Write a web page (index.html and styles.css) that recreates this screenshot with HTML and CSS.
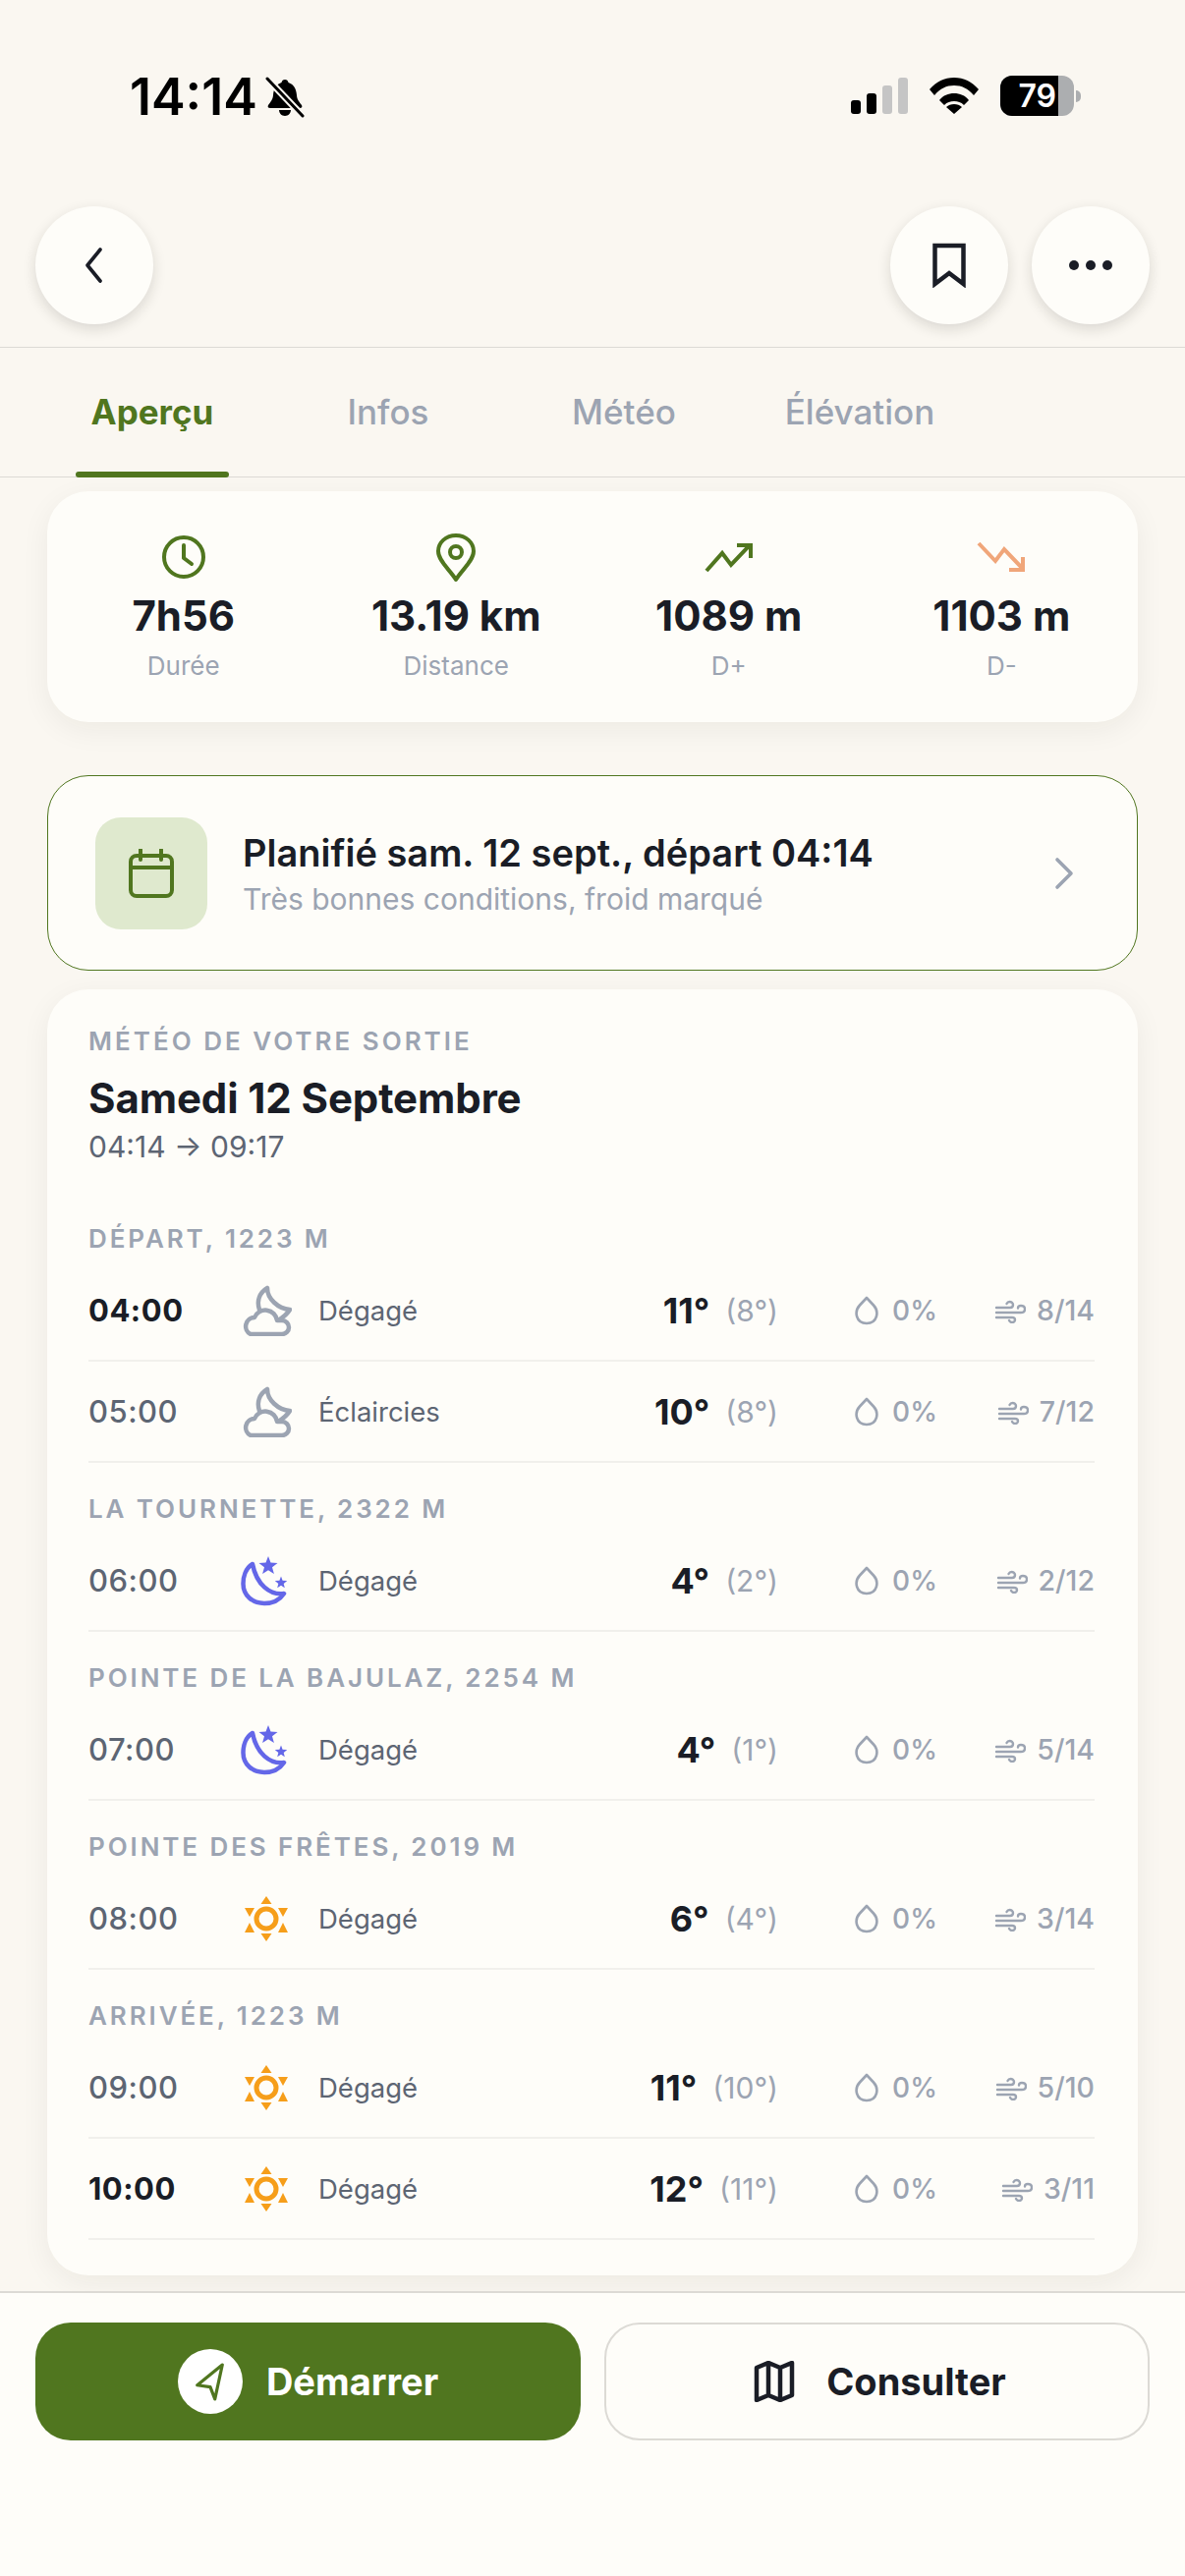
FILE: index.html
```html
<!DOCTYPE html>
<html lang="fr">

<head>
  <meta charset="UTF-8">
  <meta name="viewport" content="width=device-width, initial-scale=1.0">
  <title>Sortie</title>
  <link rel="stylesheet" href="styles.css">
</head>

<body>
  <svg class="defs" width="0" height="0">
    <symbol id="cloud-moon" viewBox="0 0 52 52">
      <path d="M27 3C19 8 16 16 19 25M27 3C27 14 38 24 50 25 47 30 43 33 38 36" fill="none" stroke="currentColor" stroke-width="4.500" stroke-linejoin="round" stroke-linecap="round"/>
      <path d="M10 50h32a7 7 0 0 0 0-14h-5a12 12 0 0 0-23-3 9 9 0 0 0-4 17z" fill="#fefdf9" stroke="currentColor" stroke-width="4.500" stroke-linejoin="round"/>
    </symbol>
    <symbol id="moon-stars" viewBox="0 0 52 52">
      <path d="M12 9C5 13 2.500 22 2.500 29 2.500 41 12 49 24 49 33 49 40 45 44 39 30 41 16 30 12 9z" fill="none" stroke="currentColor" stroke-width="4.500" stroke-linejoin="round"/>
      <polygon points="28,1 30.500,7.600 37.500,7.900 32,12.300 33.900,19.100 28,15.200 22.100,19.100 24,12.300 18.500,7.900 25.500,7.600" fill="currentColor"/>
      <polygon points="41,21.500 42.600,25.700 47.200,26 43.700,28.900 44.800,33.300 41,30.800 37.200,33.300 38.300,28.900 34.800,26 39.400,25.700" fill="currentColor"/>
    </symbol>
    <symbol id="sun" viewBox="-26 -26 52 52">
      <circle r="10" fill="none" stroke="currentColor" stroke-width="5"/>
      <path d="M0-23l5.500 8h-11zM0 23l-5.500-8h11zM-22-11h10l-5 9zM22-11H12l5 9zM-22 14h10l-5-10zM22 14H12l5-10z" fill="currentColor"/>
    </symbol>
    <symbol id="drop" viewBox="0 0 26 30">
      <path d="M13 2l7 7.500c6 6.500 4 18.500-7 18.500S0 16 6 9.500z" fill="none" stroke="currentColor" stroke-width="2.600" stroke-linejoin="round"/>
    </symbol>
    <symbol id="wind" viewBox="0 0 32 26">
      <path d="M2 10h14c2 0 3-1 3-3s-2-3-3.500-3-2.500 1-3 2M2 15h25c2 0 4-1 4-3.500S29 8 27 8s-3 1-3 2.500M2 20h16c2 0 3 1 3 2.500S19.500 25 18 25s-2.500-1-3-2" fill="none" stroke="currentColor" stroke-width="2.400" stroke-linecap="round"/>
    </symbol>
  </svg>

  <div class="screen">
    <div class="status">
      <div class="status-left">
        <span class="clock">14:14</span>
        <svg class="bell" viewBox="0 0 40 42" width="40" height="42">
          <path d="M20 3c2 0 3 1 3.500 3 6 2 8 7 8.500 13 .3 5 3 7 5 10 1 2 0 3-2 3H5c-2 0-3-1-2-3 2-3 4.500-5 5-10 .5-6 2.500-11 8.500-13C17 4 18 3 20 3zM14 34h12c0 3-2.500 6-6 6s-6-3-6-6z" fill="#000"/>
          <path d="M1 1l38 40" stroke="#faf7f1" stroke-width="7"/>
          <path d="M2 2l36 38" stroke="#000" stroke-width="3" stroke-linecap="round"/>
        </svg>
      </div>
      <div class="status-right">
        <div class="signal">
          <i class="bar on b1"></i><i class="bar on b2"></i><i class="bar b3"></i><i class="bar b4"></i>
        </div>
        <svg class="wifi" viewBox="0 0 50 37" width="50" height="37">
          <path d="M0 12C7 4 15 0 25 0s18 4 25 12l-5 6C39 11 33 8 25 8S11 11 5 18zM10 23c4-5 9-7 15-7s11 2 15 7l-5 5c-3-3-6-4-10-4s-7 1-10 4zM17 30c2-2 5-3 8-3s6 1 8 3l-8 7z" fill="#000"/>
        </svg>
        <div class="battery">
          <div class="battery-body"><span class="battery-fill">79</span></div>
          <i class="battery-cap"></i>
        </div>
      </div>
    </div>

    <div class="topbar">
      <button class="round-btn">
        <svg class="back" viewBox="0 0 24 40" width="24" height="40"><path d="M20 4L7 20l13 16" fill="none" stroke="#1a1d26" stroke-width="3.600" stroke-linecap="round" stroke-linejoin="round"/></svg>
      </button>
      <div class="top-actions">
        <button class="round-btn">
          <svg viewBox="0 0 36 46" width="36" height="46"><path d="M3.500 3h29v39L18 31 3.500 42z" fill="none" stroke="#1a1d26" stroke-width="4.500"/></svg>
        </button>
        <button class="round-btn">
          <svg viewBox="0 0 46 12" width="46" height="12"><circle cx="6" cy="6" r="5" fill="#1a1d26"/><circle cx="23" cy="6" r="5" fill="#1a1d26"/><circle cx="40" cy="6" r="5" fill="#1a1d26"/></svg>
        </button>
      </div>
    </div>

    <div class="tabs">
      <div class="tab active">Aperçu</div>
      <div class="tab">Infos</div>
      <div class="tab">Météo</div>
      <div class="tab">Élévation</div>
    </div>

    <main class="content">
      <section class="card stats">
        <div class="stat">
          <svg class="stat-icon" viewBox="0 0 46 50" width="46" height="50"><circle cx="23" cy="24" r="20" fill="none" stroke="#50761f" stroke-width="4"/><path d="M23 12v13l8 6" fill="none" stroke="#50761f" stroke-width="4" stroke-linecap="round" stroke-linejoin="round"/></svg>
          <div class="stat-value">7h56</div>
          <div class="stat-label">Durée</div>
        </div>
        <div class="stat">
          <svg class="stat-icon" viewBox="0 0 46 50" width="46" height="50"><path d="M23 47C17 37 5 28 5 18 5 9 13 2 23 2s18 7 18 16c0 10-12 19-18 29z" fill="none" stroke="#50761f" stroke-width="4" stroke-linejoin="round"/><circle cx="23" cy="19" r="6" fill="none" stroke="#50761f" stroke-width="4"/></svg>
          <div class="stat-value">13.19 km</div>
          <div class="stat-label">Distance</div>
        </div>
        <div class="stat">
          <svg class="stat-icon" viewBox="0 0 50 50" width="50" height="50"><path d="M2 38L18 20l9 12L46 12" fill="none" stroke="#50761f" stroke-width="4"/><path d="M33 12h14v13" fill="none" stroke="#50761f" stroke-width="4"/></svg>
          <div class="stat-value">1089 m</div>
          <div class="stat-label">D+</div>
        </div>
        <div class="stat">
          <svg class="stat-icon" viewBox="0 0 50 50" width="50" height="50"><path d="M2 10l17 18 9-12 19 20" fill="none" stroke="#f0a67a" stroke-width="4"/><path d="M47 24v13H33" fill="none" stroke="#f0a67a" stroke-width="4"/></svg>
          <div class="stat-value">1103 m</div>
          <div class="stat-label">D-</div>
        </div>
      </section>

      <section class="card planned">
        <div class="planned-icon">
          <svg viewBox="0 0 46 50" width="46" height="50"><rect x="2" y="7" width="42" height="41" rx="6" fill="none" stroke="#50761f" stroke-width="4"/><path d="M2 19h42M12 1v10M33 1v10" stroke="#50761f" stroke-width="4" stroke-linecap="round"/></svg>
        </div>
        <div class="planned-text">
          <div class="planned-title">Planifié sam. 12 sept., départ 04:14</div>
          <div class="planned-sub">Très bonnes conditions, froid marqué</div>
        </div>
        <svg class="planned-arrow" viewBox="0 0 20 34" width="20" height="34"><path d="M3 3l14 14L3 31" fill="none" stroke="#9ca4b2" stroke-width="3.600" stroke-linecap="round" stroke-linejoin="round"/></svg>
      </section>

      <section class="card weather">
        <div class="weather-kicker">MÉTÉO DE VOTRE SORTIE</div>
        <div class="weather-date">Samedi 12 Septembre</div>
        <div class="weather-range">04:14 → 09:17</div>

        <div class="place first">DÉPART, 1223 M</div>
        <div class="row">
          <span class="hour strong">04:00</span>
          <svg class="w-icon grey"><use href="#cloud-moon"/></svg>
          <span class="cond">Dégagé</span>
          <span class="temp">11°</span><span class="feel">(8°)</span>
          <span class="rain"><svg class="drop"><use href="#drop"/></svg>0%</span>
          <span class="windv"><svg class="wind"><use href="#wind"/></svg>8/14</span>
        </div>
        <div class="row">
          <span class="hour">05:00</span>
          <svg class="w-icon grey"><use href="#cloud-moon"/></svg>
          <span class="cond">Éclaircies</span>
          <span class="temp">10°</span><span class="feel">(8°)</span>
          <span class="rain"><svg class="drop"><use href="#drop"/></svg>0%</span>
          <span class="windv"><svg class="wind"><use href="#wind"/></svg>7/12</span>
        </div>

        <div class="place">LA TOURNETTE, 2322 M</div>
        <div class="row">
          <span class="hour">06:00</span>
          <svg class="w-icon violet"><use href="#moon-stars"/></svg>
          <span class="cond">Dégagé</span>
          <span class="temp">4°</span><span class="feel">(2°)</span>
          <span class="rain"><svg class="drop"><use href="#drop"/></svg>0%</span>
          <span class="windv"><svg class="wind"><use href="#wind"/></svg>2/12</span>
        </div>

        <div class="place">POINTE DE LA BAJULAZ, 2254 M</div>
        <div class="row">
          <span class="hour">07:00</span>
          <svg class="w-icon violet"><use href="#moon-stars"/></svg>
          <span class="cond">Dégagé</span>
          <span class="temp">4°</span><span class="feel">(1°)</span>
          <span class="rain"><svg class="drop"><use href="#drop"/></svg>0%</span>
          <span class="windv"><svg class="wind"><use href="#wind"/></svg>5/14</span>
        </div>

        <div class="place">POINTE DES FRÊTES, 2019 M</div>
        <div class="row">
          <span class="hour">08:00</span>
          <svg class="w-icon orange"><use href="#sun"/></svg>
          <span class="cond">Dégagé</span>
          <span class="temp">6°</span><span class="feel">(4°)</span>
          <span class="rain"><svg class="drop"><use href="#drop"/></svg>0%</span>
          <span class="windv"><svg class="wind"><use href="#wind"/></svg>3/14</span>
        </div>

        <div class="place">ARRIVÉE, 1223 M</div>
        <div class="row">
          <span class="hour">09:00</span>
          <svg class="w-icon orange"><use href="#sun"/></svg>
          <span class="cond">Dégagé</span>
          <span class="temp">11°</span><span class="feel">(10°)</span>
          <span class="rain"><svg class="drop"><use href="#drop"/></svg>0%</span>
          <span class="windv"><svg class="wind"><use href="#wind"/></svg>5/10</span>
        </div>
        <div class="row">
          <span class="hour strong">10:00</span>
          <svg class="w-icon orange"><use href="#sun"/></svg>
          <span class="cond">Dégagé</span>
          <span class="temp">12°</span><span class="feel">(11°)</span>
          <span class="rain"><svg class="drop"><use href="#drop"/></svg>0%</span>
          <span class="windv"><svg class="wind"><use href="#wind"/></svg>3/11</span>
        </div>
      </section>
    </main>

    <footer class="footer">
      <button class="action primary">
        <span class="go-icon">
          <svg viewBox="0 0 36 42" width="36" height="42"><path d="M31 3L4 25l14 2 5 13z" fill="none" stroke="#50761f" stroke-width="3.400" stroke-linejoin="round"/></svg>
        </span>
        Démarrer
      </button>
      <button class="action secondary">
        <svg viewBox="0 0 42 42" width="42" height="42"><path d="M3 7l12-5 12 5 12-5v33l-12 5-12-5-12 5zM15 2v33M27 7v33" fill="none" stroke="#1a1d26" stroke-width="4.500" stroke-linejoin="round"/></svg>
        Consulter
      </button>
    </footer>
  </div>
</body>

</html>
```

FILE: styles.css
```css
* {
  box-sizing: border-box;
}

html,
body {
  margin: 0;
  padding: 0;
}

body {
  font-family: Inter, "Liberation Sans", sans-serif;
  background: #faf7f1;
  color: #1a1d26;
}

.defs {
  position: absolute;
}

.screen {
  width: 1206px;
  height: 2622px;
  display: flex;
  flex-direction: column;
  overflow: hidden;
}

/* status bar */
.status {
  height: 147px;
  padding: 75px 106px 0 132px;
  display: flex;
  justify-content: space-between;
  align-items: flex-start;
  flex-shrink: 0;
}

.status-left {
  display: flex;
  align-items: center;
  gap: 8px;
}

.clock {
  font-size: 52px;
  line-height: 48px;
  font-weight: 600;
  color: #000;
}

.status-right {
  display: flex;
  align-items: center;
  gap: 22px;
  padding-top: 2px;
}

.signal {
  display: flex;
  align-items: flex-end;
  gap: 6px;
  height: 37px;
}

.bar {
  width: 10px;
  border-radius: 3px;
  background: #c5c5c5;
}

.bar.on {
  background: #000;
}

.b1 { height: 14px; }
.b2 { height: 21px; }
.b3 { height: 29px; }
.b4 { height: 37px; }

.battery {
  display: flex;
  align-items: center;
  gap: 2px;
}

.battery-body {
  width: 75px;
  height: 41px;
  border-radius: 12px;
  background: #acaeb0;
  overflow: hidden;
}

.battery-fill {
  display: block;
  width: 59px;
  height: 41px;
  background: #000;
  color: #fff;
  font-size: 32px;
  font-weight: 600;
  line-height: 41px;
  text-align: right;
  padding-right: 2px;
}

.battery-cap {
  width: 5px;
  height: 12px;
  border-radius: 0 5px 5px 0;
  background: #acaeb0;
}

/* top bar */
.topbar {
  height: 207px;
  padding: 63px 36px 0;
  display: flex;
  justify-content: space-between;
  align-items: flex-start;
  flex-shrink: 0;
  border-bottom: 1px solid #dcdad5;
}

.top-actions {
  display: flex;
  gap: 24px;
}

.round-btn {
  width: 120px;
  height: 120px;
  padding: 0;
  border: 0;
  border-radius: 50%;
  background: #fefdf9;
  box-shadow: 0 5px 14px rgba(30, 30, 20, 0.14);
  display: flex;
  align-items: center;
  justify-content: center;
}

.back {
  margin-right: 4px;
}

/* tabs */
.tabs {
  height: 132px;
  padding-left: 35px;
  display: grid;
  grid-template-columns: repeat(4, 240px);
  flex-shrink: 0;
  border-bottom: 1px solid #dcdad5;
}

.tab {
  position: relative;
  display: flex;
  align-items: center;
  justify-content: center;
  padding-bottom: 2px;
  font-size: 35px;
  font-weight: 500;
  color: #9ca4b2;
  white-space: nowrap;
}

.tab.active {
  color: #50761f;
  font-weight: 700;
}

.tab.active::after {
  content: "";
  position: absolute;
  left: 42px;
  bottom: -1px;
  width: 156px;
  height: 6px;
  border-radius: 3px;
  background: #50761f;
}

/* scroll area */
.content {
  flex: 1;
  min-height: 0;
  padding: 14px 48px 0;
  display: flex;
  flex-direction: column;
  overflow: hidden;
}

.card {
  background: #fefdf9;
  border-radius: 42px;
  box-shadow: 0 8px 30px rgba(30, 30, 20, 0.06);
  flex-shrink: 0;
}

.stats {
  height: 235px;
  display: grid;
  grid-template-columns: repeat(4, 1fr);
  padding-top: 43px;
}

.stat {
  display: flex;
  flex-direction: column;
  align-items: center;
}

.stat-icon {
  display: block;
}

.stat-value {
  margin-top: 11px;
  font-size: 42px;
  line-height: 46px;
  font-weight: 700;
  white-space: nowrap;
}

.stat-label {
  margin-top: 13px;
  font-size: 26px;
  line-height: 30px;
  color: #9ca4b2;
}

.planned {
  margin-top: 54px;
  height: 199px;
  padding: 0 48px;
  border: 1.500px solid #50761f;
  box-shadow: none;
  display: flex;
  align-items: center;
}

.planned-icon {
  width: 114px;
  height: 114px;
  border-radius: 26px;
  background: #dfe9ce;
  display: flex;
  align-items: center;
  justify-content: center;
  flex-shrink: 0;
}

.planned-text {
  flex: 1;
  margin-left: 36px;
}

.planned-title {
  font-size: 38px;
  line-height: 46px;
  font-weight: 600;
  white-space: nowrap;
}

.planned-sub {
  margin-top: 6px;
  font-size: 30px;
  line-height: 36px;
  color: #9ca4b2;
}

.planned-arrow {
  margin-right: 16px;
}

.weather {
  margin-top: 19px;
  padding: 38px 44px 0 42px;
  height: 1309px;
}

.weather-kicker,
.place {
  font-size: 26px;
  line-height: 30px;
  font-weight: 600;
  letter-spacing: 2.900px;
  color: #9ca4b2;
}

.weather-kicker {
  letter-spacing: 3px;
}

.weather-date {
  margin-top: 18px;
  font-size: 42px;
  line-height: 50px;
  font-weight: 700;
  letter-spacing: -0.100px;
}

.weather-range {
  margin-top: 6px;
  font-size: 30px;
  line-height: 36px;
  color: #5d6573;
}

.place {
  margin-top: 32px;
  height: 30px;
}

.place.first {
  margin-top: 61px;
}

.place + .row {
  margin-top: 7px;
}

.row {
  height: 103px;
  display: flex;
  align-items: center;
  border-bottom: 2px solid #f1f0ec;
}

.hour {
  width: 155px;
  font-size: 31px;
  font-weight: 500;
  color: #5d6573;
  letter-spacing: 0.500px;
}

.hour.strong {
  font-weight: 700;
  color: #1a1d26;
}

.w-icon {
  width: 52px;
  height: 52px;
  flex-shrink: 0;
}

.w-icon.grey { color: #9ca4b2; }
.w-icon.violet { color: #6467e8; }
.w-icon.orange { color: #f69e1a; }

.cond {
  margin-left: 27px;
  flex: 1;
  font-size: 27.500px;
  color: #5d6573;
}

.temp {
  font-size: 36px;
  font-weight: 700;
}

.feel {
  margin-left: 16px;
  font-size: 30px;
  color: #9ca4b2;
  white-space: nowrap;
}

.rain {
  width: 162px;
  display: flex;
  align-items: center;
  justify-content: flex-end;
  gap: 13px;
  font-size: 28px;
  font-weight: 500;
  color: #9ca4b2;
}

.windv {
  width: 160px;
  display: flex;
  align-items: center;
  justify-content: flex-end;
  gap: 11px;
  font-size: 28.500px;
  font-weight: 500;
  color: #9ca4b2;
}

.drop {
  width: 26px;
  height: 30px;
}

.wind {
  width: 32px;
  height: 26px;
}

/* bottom buttons */
.footer {
  height: 290px;
  flex-shrink: 0;
  background: #fefdf9;
  border-top: 2px solid #dcdad5;
  padding: 30px 36px 0;
  display: flex;
  gap: 24px;
  align-items: flex-start;
}

.action {
  flex: 0 0 555px;
  height: 120px;
  border-radius: 36px;
  display: flex;
  align-items: center;
  justify-content: center;
  font-family: inherit;
  font-size: 38px;
  font-weight: 700;
  padding: 0;
}

.primary {
  background: #50761f;
  border: 0;
  color: #fff;
  gap: 24px;
}

.secondary {
  background: #fefdf9;
  border: 2px solid #dcdad5;
  color: #1a1d26;
  gap: 32px;
  padding-left: 6px;
}

.go-icon {
  width: 66px;
  height: 66px;
  border-radius: 50%;
  background: #fff;
  display: flex;
  align-items: center;
  justify-content: center;
}

.go-icon svg {
  width: 34px;
  height: 40px;
}
```
